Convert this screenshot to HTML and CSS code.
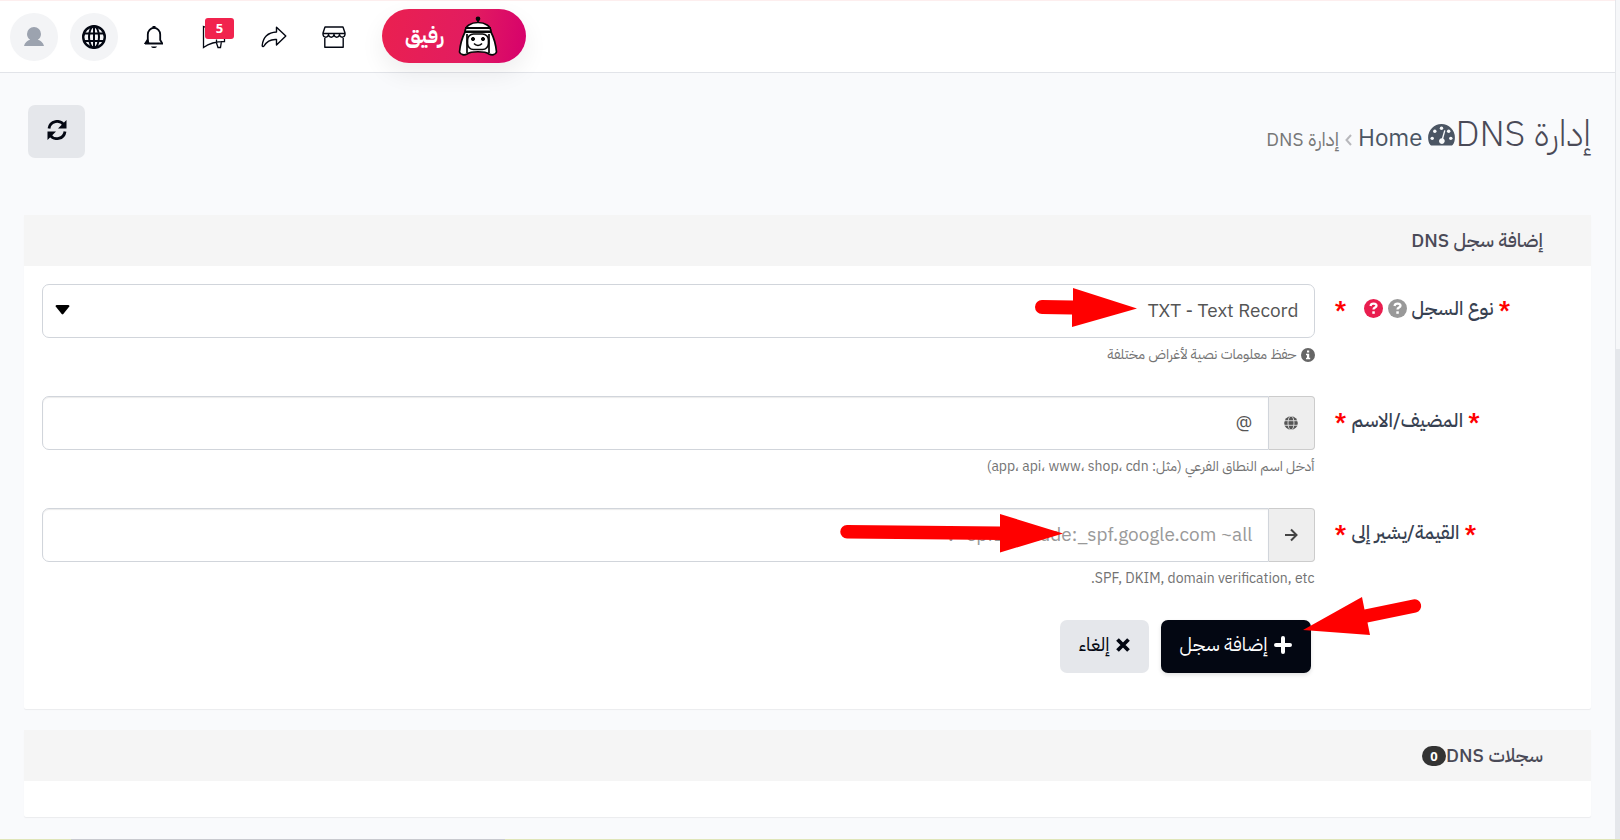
FILE: index.html
```html
<!DOCTYPE html>
<html lang="ar" dir="rtl">
<head>
<meta charset="utf-8">
<meta name="viewport" content="width=device-width, initial-scale=1">
<title>إدارة DNS</title>
<link rel="stylesheet" href="styles.css">
</head>
<body>
<div class="track"><div class="thumb"></div></div>
<div class="page">
<header class="topbar" dir="ltr">
  <button class="icon-button filled" type="button" aria-label="الحساب">
    <svg width="20" height="20" viewBox="0 0 20 20"><path fill="#9ca3af" d="M10 0a7 7 0 0 1 7 7c0 2.600-1.300 4.600-3.200 5.800 3 .8 5.500 2.800 6.200 6.200H0c.7-3.400 3.200-5.400 6.200-6.200A7 7 0 0 1 3 7a7 7 0 0 1 7-7z"/></svg>
  </button>
  <button class="icon-button filled" type="button" aria-label="اللغة">
    <svg width="24" height="24" viewBox="0 0 24 24" fill="none" stroke="#030712" stroke-width="2"><circle cx="12" cy="12" r="10.800" stroke-width="2.400"/><ellipse cx="12" cy="12" rx="5" ry="10.800"/><path d="M12 1v22M2 8.500h20M2 16h20"/></svg>
  </button>
  <button class="icon-button" type="button" aria-label="الإشعارات">
    <svg width="20" height="24" viewBox="0 0 20 24" fill="none" stroke="#030712" stroke-width="1.800"><path d="M3.800 18V9.500a6.200 6.600 0 0 1 12.400 0V15l1.800 3"/><path d="M1 18.500h18" stroke-width="2"/><path d="M10 1v2.500" stroke-width="3"/><path d="M7 21.500c1 2 5 2 6 0z" fill="#030712" stroke="none"/><path d="M3.500 15 1.500 18h3z" fill="#030712"/></svg>
  </button>
  <button class="icon-button" type="button" aria-label="الإعلانات">
    <svg width="24" height="24" viewBox="0 0 24 24" fill="none" stroke="#030712" stroke-width="1.300"><path d="M1.500 1.500v21c6-4.500 12-6 21-6V4C15 5 8 4.500 1.500 1.500zM14 16.500l2 6h2.500l1-6.500M14.500 17.500v-3"/></svg>
    <span class="count">5</span>
  </button>
  <button class="icon-button" type="button" aria-label="مشاركة">
    <svg width="26" height="22" viewBox="0 0 26 22" fill="none" stroke="#030712" stroke-width="1.400" stroke-linejoin="round"><path d="M15.500 1.200 24.800 10l-9.300 9v-5.500c-6-.5-9.500 1.500-12.500 6.500-.5.800-1.800.8-1.800-.5C2 11.500 7 6.500 15.500 6z"/></svg>
  </button>
  <button class="icon-button" type="button" aria-label="المتجر">
    <svg width="24" height="22" viewBox="0 0 24 22" fill="none" stroke="#030712" stroke-width="1.400" stroke-linejoin="round"><path d="M3 1h18l2 6v1.500a2.800 3.300 0 0 1-5.500 0 2.800 3.300 0 0 1-5.500 0 2.800 3.300 0 0 1-5.500 0 2.800 3.300 0 0 1-5.500 0V7zM1 7.500h22M2.800 12v9.300h18.400V12"/></svg>
  </button>
  <button class="assistant" type="button">
    <span lang="ar">رفيق</span>
    <svg width="40" height="40" viewBox="0 0 40 40" fill="#fff" stroke="#080808" stroke-width="1.700" stroke-linejoin="round"><path d="M20 3v5"/><circle cx="20" cy="2.800" r="1.500" fill="#080808"/><path d="M7 16C4 22 2 30 1.500 36c1 3 5 3.500 7.500 2 4-3 18-3 22 0 3 1.500 6.500 1 7.500-2C38 30 36 22 33 16z"/><path d="M7 16C7 10 13 6.500 20 6.500S33 10 33 16z"/><path d="M7 12h26M7 15.500h26" stroke-width="2"/><path d="M9 18v19M31 18v19"/><rect x="9.500" y="18" width="21" height="15.500" rx="6"/><circle cx="15" cy="23" r="1.600" fill="#080808" stroke-width="1"/><circle cx="25" cy="23" r="1.600" fill="#080808" stroke-width="1"/><path d="M16 27.500c2 2.500 6 2.500 8 0" fill="none" stroke-width="1.500"/></svg>
  </button>
</header>

<main class="content">
  <div class="heading">
    <div class="heading-text">
      <h1>إدارة DNS</h1>
      <nav class="crumbs" aria-label="مسار الصفحة">
        <a class="home" href="#">
          <svg width="27" height="22" viewBox="0 0 28 23"><path fill="#4b5563" d="M14 0a14 14 0 0 1 14 14c0 3-.7 5.500-2 7.500-.5.800-1 1.100-1.800 1.100H3.800c-.8 0-1.300-.3-1.800-1.100C.7 19.500 0 17 0 14A14 14 0 0 1 14 0z"/><g fill="#f9fafb"><circle cx="14" cy="4.500" r="1.800"/><circle cx="7" cy="7.500" r="1.800"/><circle cx="21.500" cy="7.500" r="1.800"/><circle cx="4.300" cy="15" r="1.800"/><circle cx="23.700" cy="15" r="1.800"/><path d="m16.800 6.500 1.300.4-2.200 8.300a3 3 0 1 1-1.500-.4z"/></g></svg>
          Home</a>
        <svg width="7" height="12" viewBox="0 0 7 12" fill="none" stroke="#b8b8bc" stroke-width="2"><path d="M6 1 1.500 6 6 11"/></svg>
        <span>إدارة DNS</span>
      </nav>
    </div>
    <button class="refresh" type="button" aria-label="تحديث">
      <svg width="20" height="20" viewBox="0 0 20 20" fill="none" stroke="#030712" stroke-width="2.800"><path d="M2 8.500C3 .5 13-.8 17 5M18 11.500C17 19.500 7 20.800 3 15"/><path d="M19.500 0v8.500H11zM.5 20v-8.500H9z" fill="#030712" stroke="none"/></svg>
    </button>
  </div>

  <section class="panel">
    <h2>إضافة سجل DNS</h2>
    <form class="form">
      <label class="label" for="type"><b>*</b> نوع السجل
        <svg width="19" height="19" viewBox="0 0 19 19"><circle cx="9.500" cy="9.500" r="9.500" fill="#999"/><path d="M6.500 7c.5-3.500 6-3 6-.2 0 1.800-3 1.800-3 3.700" fill="none" stroke="#fff" stroke-width="2.300"/><path d="M8.300 12.300h2.500v2.500H8.300z" fill="#fff"/></svg>
        <svg width="19" height="19" viewBox="0 0 19 19"><circle cx="9.500" cy="9.500" r="9.500" fill="#e91e4f"/><path d="M6.500 7c.5-3.500 6-3 6-.2 0 1.800-3 1.800-3 3.700" fill="none" stroke="#fff" stroke-width="2.300"/><path d="M8.300 12.300h2.500v2.500H8.300z" fill="#fff"/></svg>
        <b class="far">*</b></label>
      <div class="field">
        <div class="select-wrap">
          <select id="type"><option>TXT - Text Record</option></select>
          <svg class="caret" width="15" height="10" viewBox="0 0 15 10"><path d="M1.500 0h12q1.500.5.800 1.500L8.300 9q-.8.800-1.600 0L.7 1.500Q0 .5 1.500 0z"/></svg>
        </div>
        <p class="hint"><svg width="14" height="14" viewBox="0 0 14 14"><circle cx="7" cy="7" r="7" fill="#666"/><path d="M6 2.500h2.200v2H6zM5 5.800h3.200v4h1V11.300H5V9.800h1V7.200H5z" fill="#fff"/></svg> حفظ معلومات نصية لأغراض مختلفة</p>
      </div>

      <label class="label" for="host"><b>*</b> المضيف/الاسم <b>*</b></label>
      <div class="field">
        <div class="group">
          <span class="addon"><svg width="14" height="14" viewBox="0 0 14 14"><circle cx="7" cy="7" r="6.800" fill="#555"/><g fill="none" stroke="#eee" stroke-width=".8"><path d="M0 4.700h14M0 9.300h14"/><ellipse cx="7" cy="7" rx="3" ry="7"/></g></svg></span>
          <input id="host" type="text" value="@">
        </div>
        <p class="hint">أدخل اسم النطاق الفرعي (مثل: app، api، www، shop، cdn)</p>
      </div>

      <label class="label" for="value"><b>*</b> القيمة/يشير إلى <b>*</b></label>
      <div class="field">
        <div class="group">
          <span class="addon"><svg width="14" height="14" viewBox="0 0 14 14" fill="none" stroke="#444" stroke-width="2"><path d="M1 7h11M7 1.500 12.500 7 7 12.500"/></svg></span>
          <input id="value" type="text" placeholder="v=spf1 include:_spf.google.com ~all">
        </div>
        <p class="hint">SPF, DKIM, domain verification, etc.</p>
      </div>

      <div class="actions">
        <button class="btn primary" type="submit"><svg width="18" height="18" viewBox="0 0 18 18" stroke="#fff" stroke-width="4" stroke-linecap="round"><path d="M9 2v14M2 9h14"/></svg>إضافة سجل</button>
        <button class="btn" type="button"><svg width="14" height="14" viewBox="0 0 14 14" stroke="#030712" stroke-width="3.800"><path d="m1.500 1.500 11 11M12.500 1.500l-11 11"/></svg>إلغاء</button>
      </div>
    </form>
  </section>

  <section class="panel">
    <h2>سجلات DNS<span class="pill">0</span></h2>
    <div class="records"></div>
  </section>
</main>
</div>
<div class="edge"></div>
<svg class="arrows" width="590" height="360" viewBox="0 0 590 360" fill="#f00" aria-hidden="true">
  <path d="M202 20 233 20.500V8l64 20.500L232 47V34.500L202 34a7 7 0 0 1 0-14z"/>
  <path d="M7 245 160 246.500V234l63 19.500-63 19V260L7 258.500a6.700 6.700 0 0 1 0-13.500z"/>
  <path d="m463 350 59-33 2.500 12.500L573 319.500a6.600 6.600 0 0 1 3 13L527.500 342.500l2.500 12.500z"/>
</svg>
</body>
</html>
```
FILE: styles.css
```css
* { box-sizing: border-box; }
body {
  margin: 0;
  min-height: 100vh;
  display: flex;
  position: relative;
  background: #f9fafc;
  color: #374151;
  font-family: "IBM Plex Sans Arabic", Roboto, "DejaVu Sans", sans-serif;
  font-size: 19px;
}
button, input, select { font: inherit; color: inherit; }
button { cursor: pointer; border: 0; }
svg { flex: none; }
.page { flex: 1; min-width: 0; }
.topbar {
  display: flex;
  align-items: center;
  gap: 12px;
  height: 73px;
  padding: 0 10px;
  background: #fff;
  border-top: 1px solid #fdeeee;
  border-bottom: 1px solid #e2e4e9;
}
.icon-button {
  position: relative;
  display: grid;
  place-items: center;
  width: 48px;
  height: 48px;
  padding: 0;
  border-radius: 50%;
  background: none;
}
.filled { background: #f3f4f6; }
.count {
  position: absolute;
  top: 5px;
  left: 15px;
  width: 29px;
  border-radius: 3px;
  background: #f1234e;
  color: #fff;
  font: bold 13px/21px "Open Sans", sans-serif;
  text-align: center;
}
.assistant {
  display: flex;
  align-items: center;
  gap: 14px;
  height: 54px;
  margin: 0 0 2px 12px;
  padding: 0 28px 0 23px;
  border-radius: 27px;
  background: linear-gradient(100deg, #ea2050, #e21c60 60%, #d6006c);
  box-shadow: 0 10px 24px rgba(0, 0, 0, .07);
  color: #fff;
  font-size: 21px;
  font-weight: bold;
}
.content { padding: 32px 24px 0; }
.heading {
  display: flex;
  justify-content: space-between;
  align-items: flex-start;
  height: 110px;
}
.heading-text { display: flex; align-items: baseline; color: #4a4a57; }
h1 { margin: 0; font-size: 36px; font-weight: 300; line-height: 58px; }
.crumbs { display: flex; align-items: baseline; gap: 6px; color: #777; }
.home {
  display: flex;
  align-items: baseline;
  gap: 6px;
  color: #4b5563;
  font-size: 24px;
  text-decoration: none;
}
.home svg { margin-bottom: -2px; }
.refresh {
  display: grid;
  place-items: center;
  width: 57px;
  height: 53px;
  margin-left: 4px;
  padding: 0 0 4px;
  border-radius: 7px;
  background: #e5e7eb;
}
.panel {
  margin-bottom: 21px;
  background: #fff;
  border-radius: 2px;
  box-shadow: 0 1px 1px rgba(0, 0, 0, .06);
}
h2 {
  display: flex;
  align-items: center;
  margin: 0;
  padding: 0 48px;
  height: 51px;
  background: #f5f5f5;
  color: #4a4a57;
  font-size: 19px;
  font-weight: 500;
}
.pill {
  width: 24px;
  border-radius: 10px;
  background: #333;
  color: #fff;
  font: bold 13px/20px "Open Sans", sans-serif;
  text-align: center;
}
.form {
  display: grid;
  grid-template-columns: minmax(0, 1fr) minmax(0, 5fr);
  column-gap: 4px;
  padding: 18px 18px 36px;
}
.label {
  display: flex;
  justify-content: flex-end;
  align-items: center;
  gap: 5px;
  height: 49px;
  padding-left: 16px;
  font-weight: 500;
  white-space: nowrap;
}
.label b { color: #f00; font-size: 20px; line-height: 24px; }
.label .far { margin-right: 12px; }
.field { min-height: 112px; }
.select-wrap { position: relative; }
select, input {
  width: 100%;
  height: 54px;
  padding: 0 15px 2px;
  border: 1px solid #d1d5db;
  border-radius: 7px;
  background: #fff;
  color: #555;
}
select { appearance: none; display: block; }
.caret { position: absolute; left: 13px; top: 21px; pointer-events: none; }
.group { display: flex; }
.addon {
  display: grid;
  place-items: center;
  width: 46px;
  border: 1px solid #ccc;
  border-left: 0;
  border-radius: 0 4px 4px 0;
  background: #eee;
}
.group input { flex: 1; min-width: 0; border-radius: 7px 0 0 7px; box-shadow: inset 0 1px 1px rgba(0, 0, 0, .08); }
input::placeholder { color: #999; opacity: 1; }
.hint {
  display: flex;
  align-items: center;
  gap: 4px;
  margin: 6px 0 0;
  color: #737373;
  font-size: 14px;
  line-height: 22px;
}
.actions { grid-column: 2; display: flex; gap: 12px; padding-right: 4px; }
.btn {
  display: flex;
  align-items: center;
  gap: 6px;
  height: 53px;
  padding: 0 19px 4px;
  border-radius: 7px;
  background: #e5e7eb;
  color: #030712;
}
.primary { background: #030712; color: #fff; box-shadow: 0 2px 4px rgba(0, 0, 0, .12); }
.records { height: 36px; }
.track { display: flex; flex-direction: column; width: 5px; border-left: 1px solid #e5e7eb; background: #f6f7f9; }
.thumb { flex: 1; margin-top: 349px; background: #e5e7eb; }
.edge {
  position: absolute;
  inset: auto 0 0;
  height: 1px;
  background: linear-gradient(90deg, #dfe5b8 71px, #c9cacf 71px, #c9cacf 505px, #dfe5b8 505px);
}
.arrows { position: absolute; left: 840px; top: 280px; pointer-events: none; }
```
